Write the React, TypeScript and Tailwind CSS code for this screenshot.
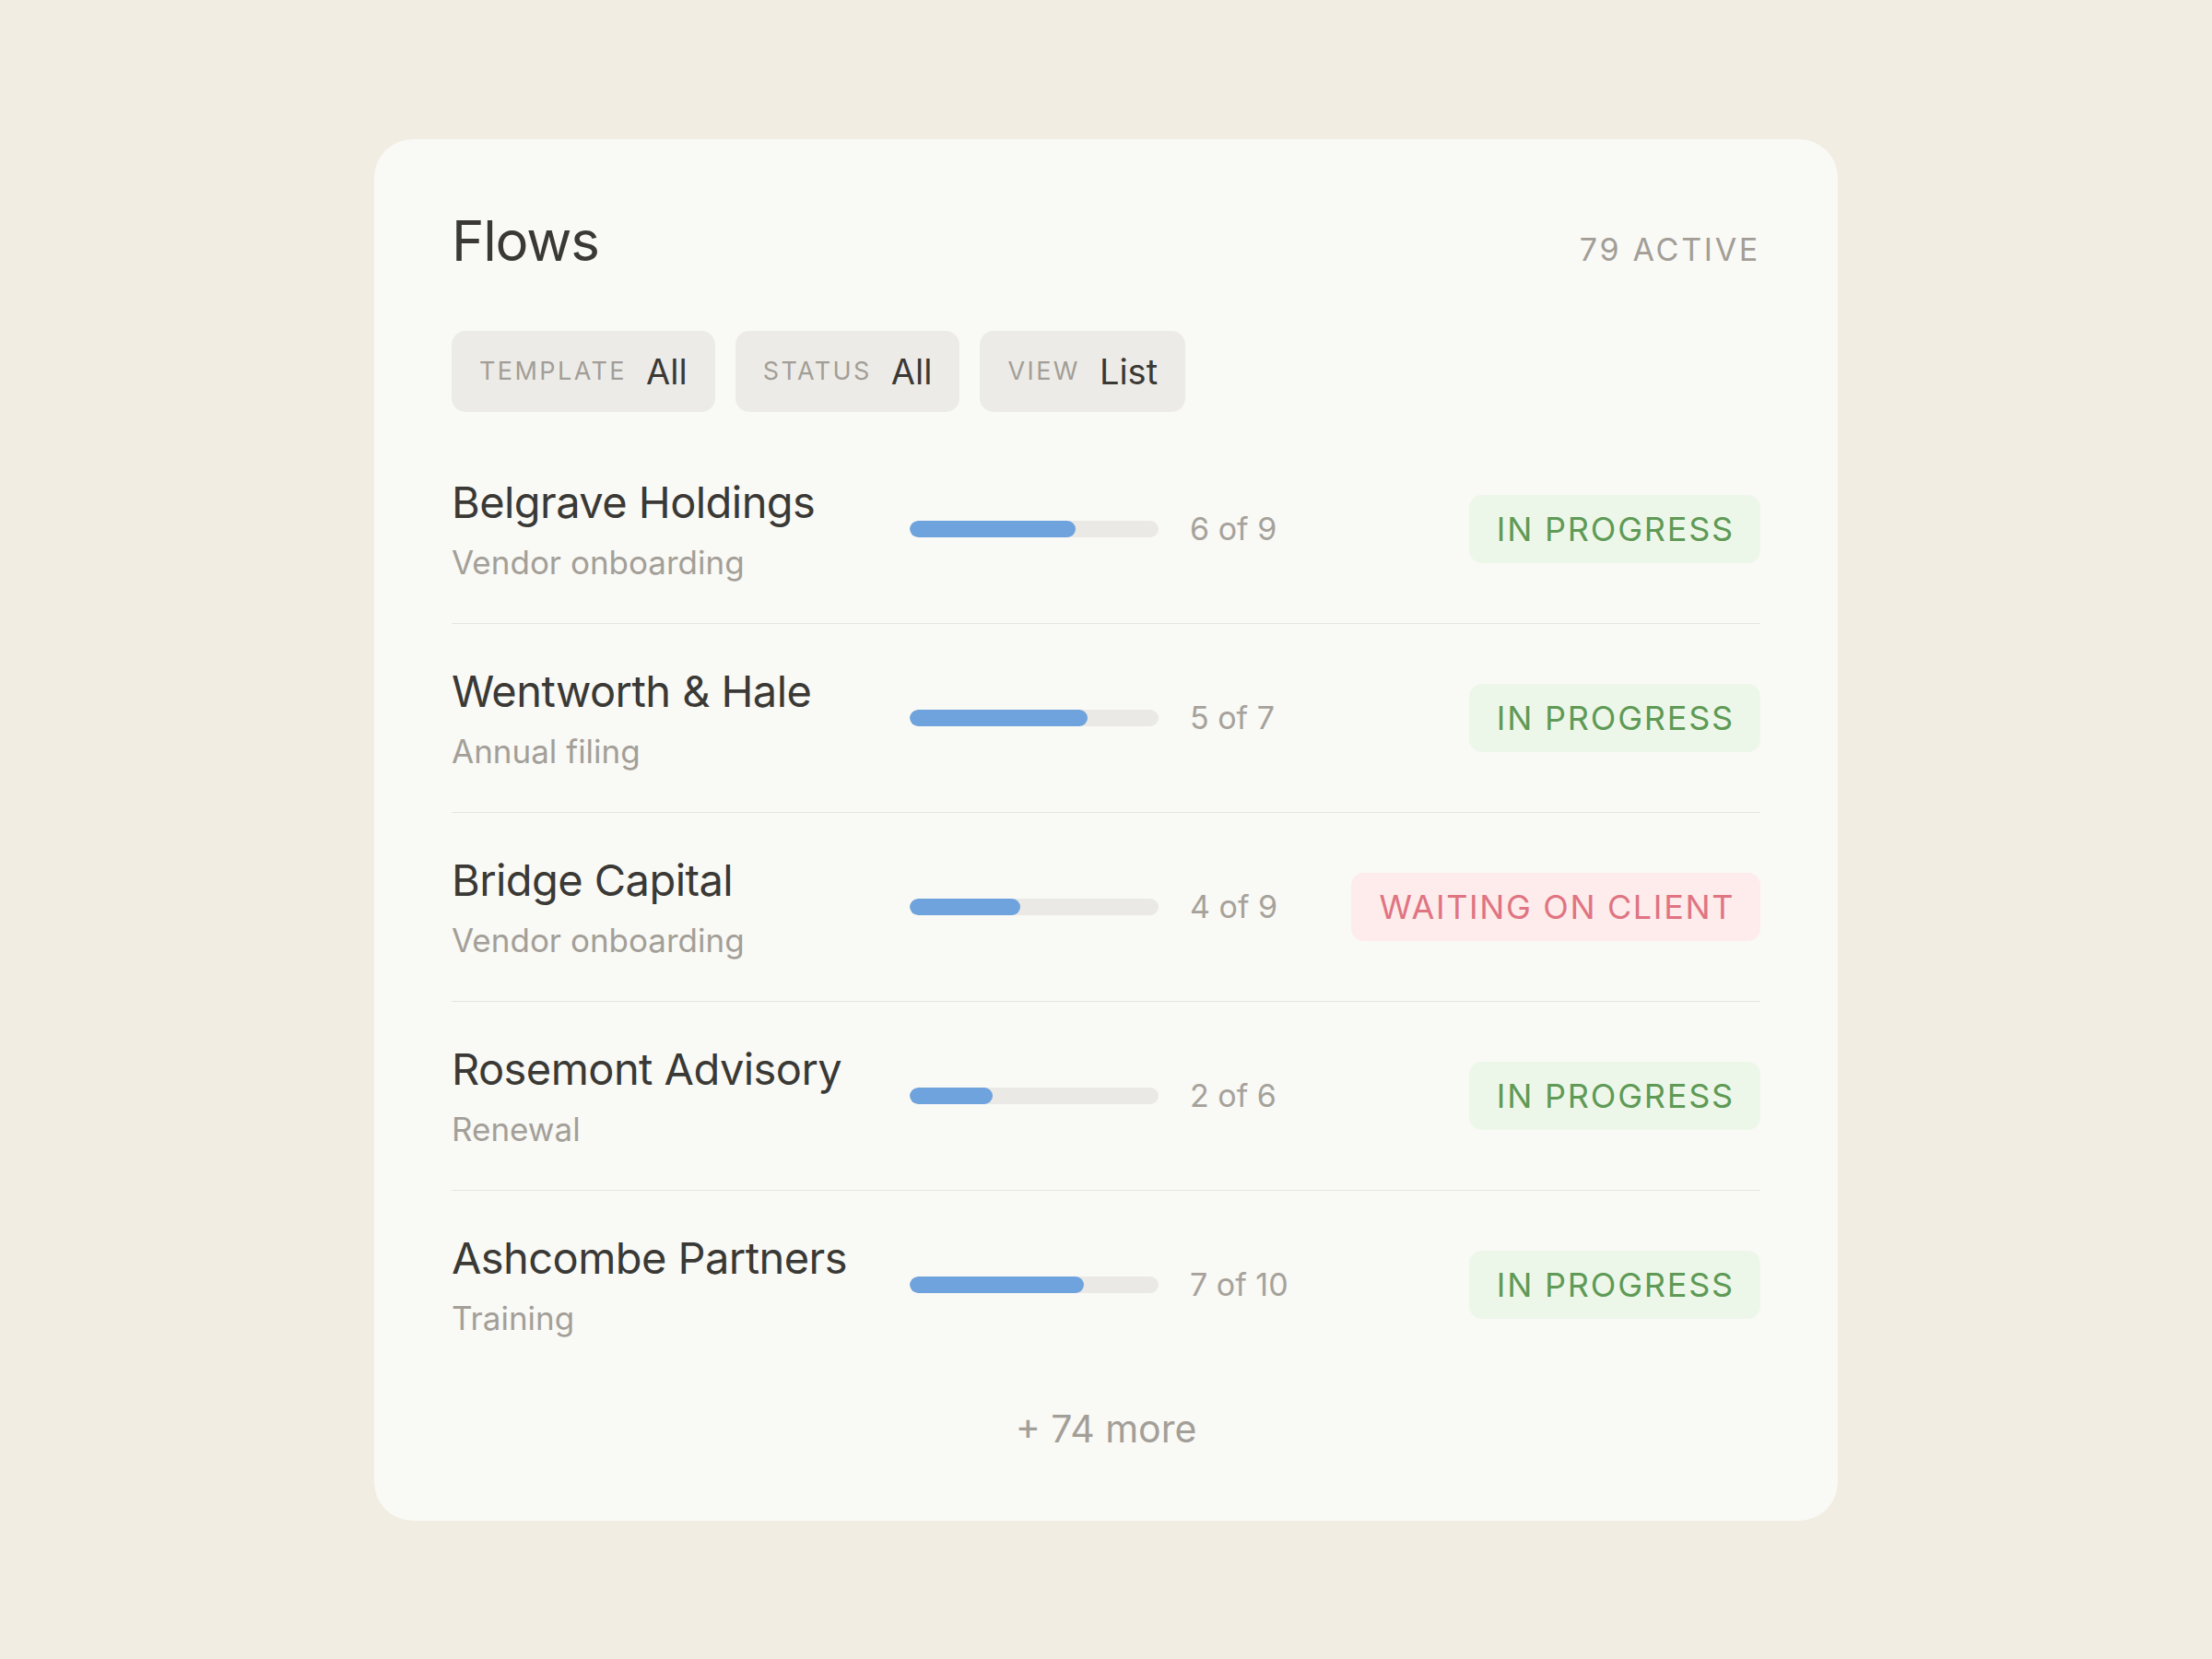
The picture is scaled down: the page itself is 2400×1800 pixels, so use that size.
import React from "react";

type Row = {
  name: string;
  sub: string;
  done: number;
  total: number;
  status: "progress" | "waiting";
};

const rows: Row[] = [
  { name: "Belgrave Holdings", sub: "Vendor onboarding", done: 6, total: 9, status: "progress" },
  { name: "Wentworth & Hale", sub: "Annual filing", done: 5, total: 7, status: "progress" },
  { name: "Bridge Capital", sub: "Vendor onboarding", done: 4, total: 9, status: "waiting" },
  { name: "Rosemont Advisory", sub: "Renewal", done: 2, total: 6, status: "progress" },
  { name: "Ashcombe Partners", sub: "Training", done: 7, total: 10, status: "progress" },
];

function Pill({ label, value }: { label: string; value: string }) {
  return (
    <div className="flex h-[88px] items-center gap-[21px] rounded-[15px] bg-[#edebe7] px-[30px]">
      <span className="text-[27px] leading-[32px] tracking-[0.09em] text-[#a29e97]">{label}</span>
      <span className="text-[38px] leading-[46px] text-[#3a3935]">{value}</span>
    </div>
  );
}

function Badge({ status }: { status: Row["status"] }) {
  if (status === "waiting") {
    return (
      <div className="flex h-[74px] items-center rounded-[14px] bg-[#fdeceb] pl-[30px] pr-[28px] text-[36px] leading-[44px] tracking-[0.045em] text-[#e07482]">
        WAITING ON CLIENT
      </div>
    );
  }
  return (
    <div className="flex h-[74px] items-center rounded-[14px] bg-[#edf7e9] pl-[30px] pr-[28px] text-[36px] leading-[44px] tracking-[0.05em] text-[#5f9a56]">
      IN PROGRESS
    </div>
  );
}

export default function App() {
  return (
    <div className="flex min-h-screen items-center justify-center bg-[#f1ede2] font-['Inter',sans-serif]">
      <div className="w-[1588px] rounded-[42px] bg-[#f9f9f5] px-[84px] pb-[75px] pt-[74px]">
        <div className="flex items-baseline justify-between">
          <h1 className="text-[60px] font-normal leading-[72px] tracking-[-0.02em] text-[#3a3935]">Flows</h1>
          <span className="text-[34px] leading-[40px] tracking-[0.08em] text-[#a29e97]">79 ACTIVE</span>
        </div>

        <div className="mt-[62px] flex gap-[22px]">
          <Pill label="TEMPLATE" value="All" />
          <Pill label="STATUS" value="All" />
          <Pill label="VIEW" value="List" />
        </div>

        <div className="mt-[25px] flex flex-col">
          {rows.map((r, i) => (
            <div
              key={r.name}
              className={
                i < rows.length - 1
                  ? "flex items-center border-b border-[#e6e4df] py-[45px]"
                  : "flex items-center py-[45px]"
              }
            >
              <div className="flex w-[497px] flex-none flex-col">
                <span className="text-[47px] leading-[56px] tracking-[-0.012em] text-[#3a3935]">{r.name}</span>
                <span className="mt-[16px] text-[35px] leading-[42px] text-[#a39f98]">{r.sub}</span>
              </div>
              <div className="h-[18px] w-[270px] flex-none overflow-hidden rounded-full bg-[#ebe9e5]">
                <div
                  className="h-full rounded-full bg-[#6fa3dd]"
                  style={{ width: `${(r.done / r.total) * 100}%` }}
                />
              </div>
              <span className="ml-[34px] text-[34px] leading-[40px] text-[#a6a29b]">
                {r.done} of {r.total}
              </span>
              <div className="ml-auto">
                <Badge status={r.status} />
              </div>
            </div>
          ))}
        </div>

        <div className="mt-[29px] text-center text-[41px] leading-[50px] text-[#a39f98]">+ 74 more</div>
      </div>
    </div>
  );
}
